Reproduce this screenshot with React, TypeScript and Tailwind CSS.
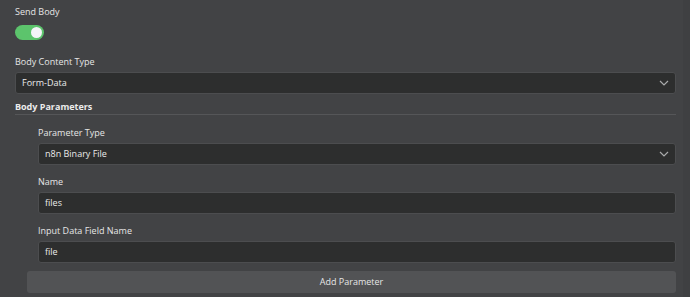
import { FC, ReactNode, useState } from "react";

const font = { fontFamily: '"Open Sans", "Noto Sans", sans-serif' };

const Label: FC<{ children: ReactNode; className?: string }> = (props) =>
{
	return (
		<div className={`h-4 leading-4 text-[9px] font-medium text-[#e6e6e6] ${props.className ?? ""}`}>
			{props.children}
		</div>
	)
}

const Chevron = () =>
{
	return (
		<svg width="10" height="6" viewBox="0 0 10 6" className="mr-[6px]">
			<path d="M1 1 L5 5 L9 1" fill="none" stroke="#a9aaab" strokeWidth="1.2" />
		</svg>
	)
}

const SelectBox: FC<{ value: string; className?: string }> = (props) =>
{
	return (
		<div className={`h-[22px] rounded-[3px] border border-[#4c4d4f] bg-[#2d2e2e] flex items-center justify-between pl-[6px] text-[9px] font-medium text-[#ebebeb] ${props.className ?? ""}`}>
			<span>{props.value}</span>
			<Chevron />
		</div>
	)
}

const TextBox: FC<{ value: string; className?: string }> = (props) =>
{
	return (
		<div className={`h-[22px] rounded-[3px] border border-[#4c4d4f] bg-[#2d2e2e] flex items-center pl-[6px] text-[9px] font-medium text-[#ebebeb] ${props.className ?? ""}`}>
			{props.value}
		</div>
	)
}

const App = () =>
{
	const [sendBody, setSendBody] = useState<boolean>(true);

	return (
		<div className="w-[690px] h-[297px] bg-[#424345] flex flex-row overflow-hidden" style={font}>
			<div className="flex-1 flex flex-col pl-[15px] pr-[7px] pt-[4px]">
				<Label>Send Body</Label>

				<button
					onClick={() => setSendBody(!sendBody)}
					className={`mt-[5px] w-[29px] h-[15px] rounded-full flex items-center px-[2px] ${sendBody ? "bg-[#5cc46c] justify-end" : "bg-[#777] justify-start"}`}
				>
					<span className="w-[11px] h-[11px] rounded-full bg-[#f4f4f8]" />
				</button>

				<Label className="mt-[14px]">Body Content Type</Label>
				<SelectBox value="Form-Data" className="mt-[2px]" />

				<div className="mt-[6px] h-[15px] leading-[14px] text-[9px] font-bold text-[#ececec] border-b border-[#555658]">
					Body Parameters
				</div>

				<div className="flex flex-col pl-[12px]">
					<div className="flex flex-col pl-[11px]">
						<Label className="mt-[10px]">Parameter Type</Label>
						<SelectBox value="n8n Binary File" className="mt-[2px]" />

						<Label className="mt-[9px]">Name</Label>
						<TextBox value="files" className="mt-[2px]" />

						<Label className="mt-[9px]">Input Data Field Name</Label>
						<TextBox value="file" className="mt-[2px]" />
					</div>

					<button className="mt-[8px] h-[22px] rounded-[3px] bg-[#525355] text-[9px] font-medium text-[#e6e6e6] flex items-center justify-center">
						Add Parameter
					</button>
				</div>
			</div>
			<div className="w-[7px] h-full bg-[#3f4042]" />
		</div>
	)
}

export default App;
